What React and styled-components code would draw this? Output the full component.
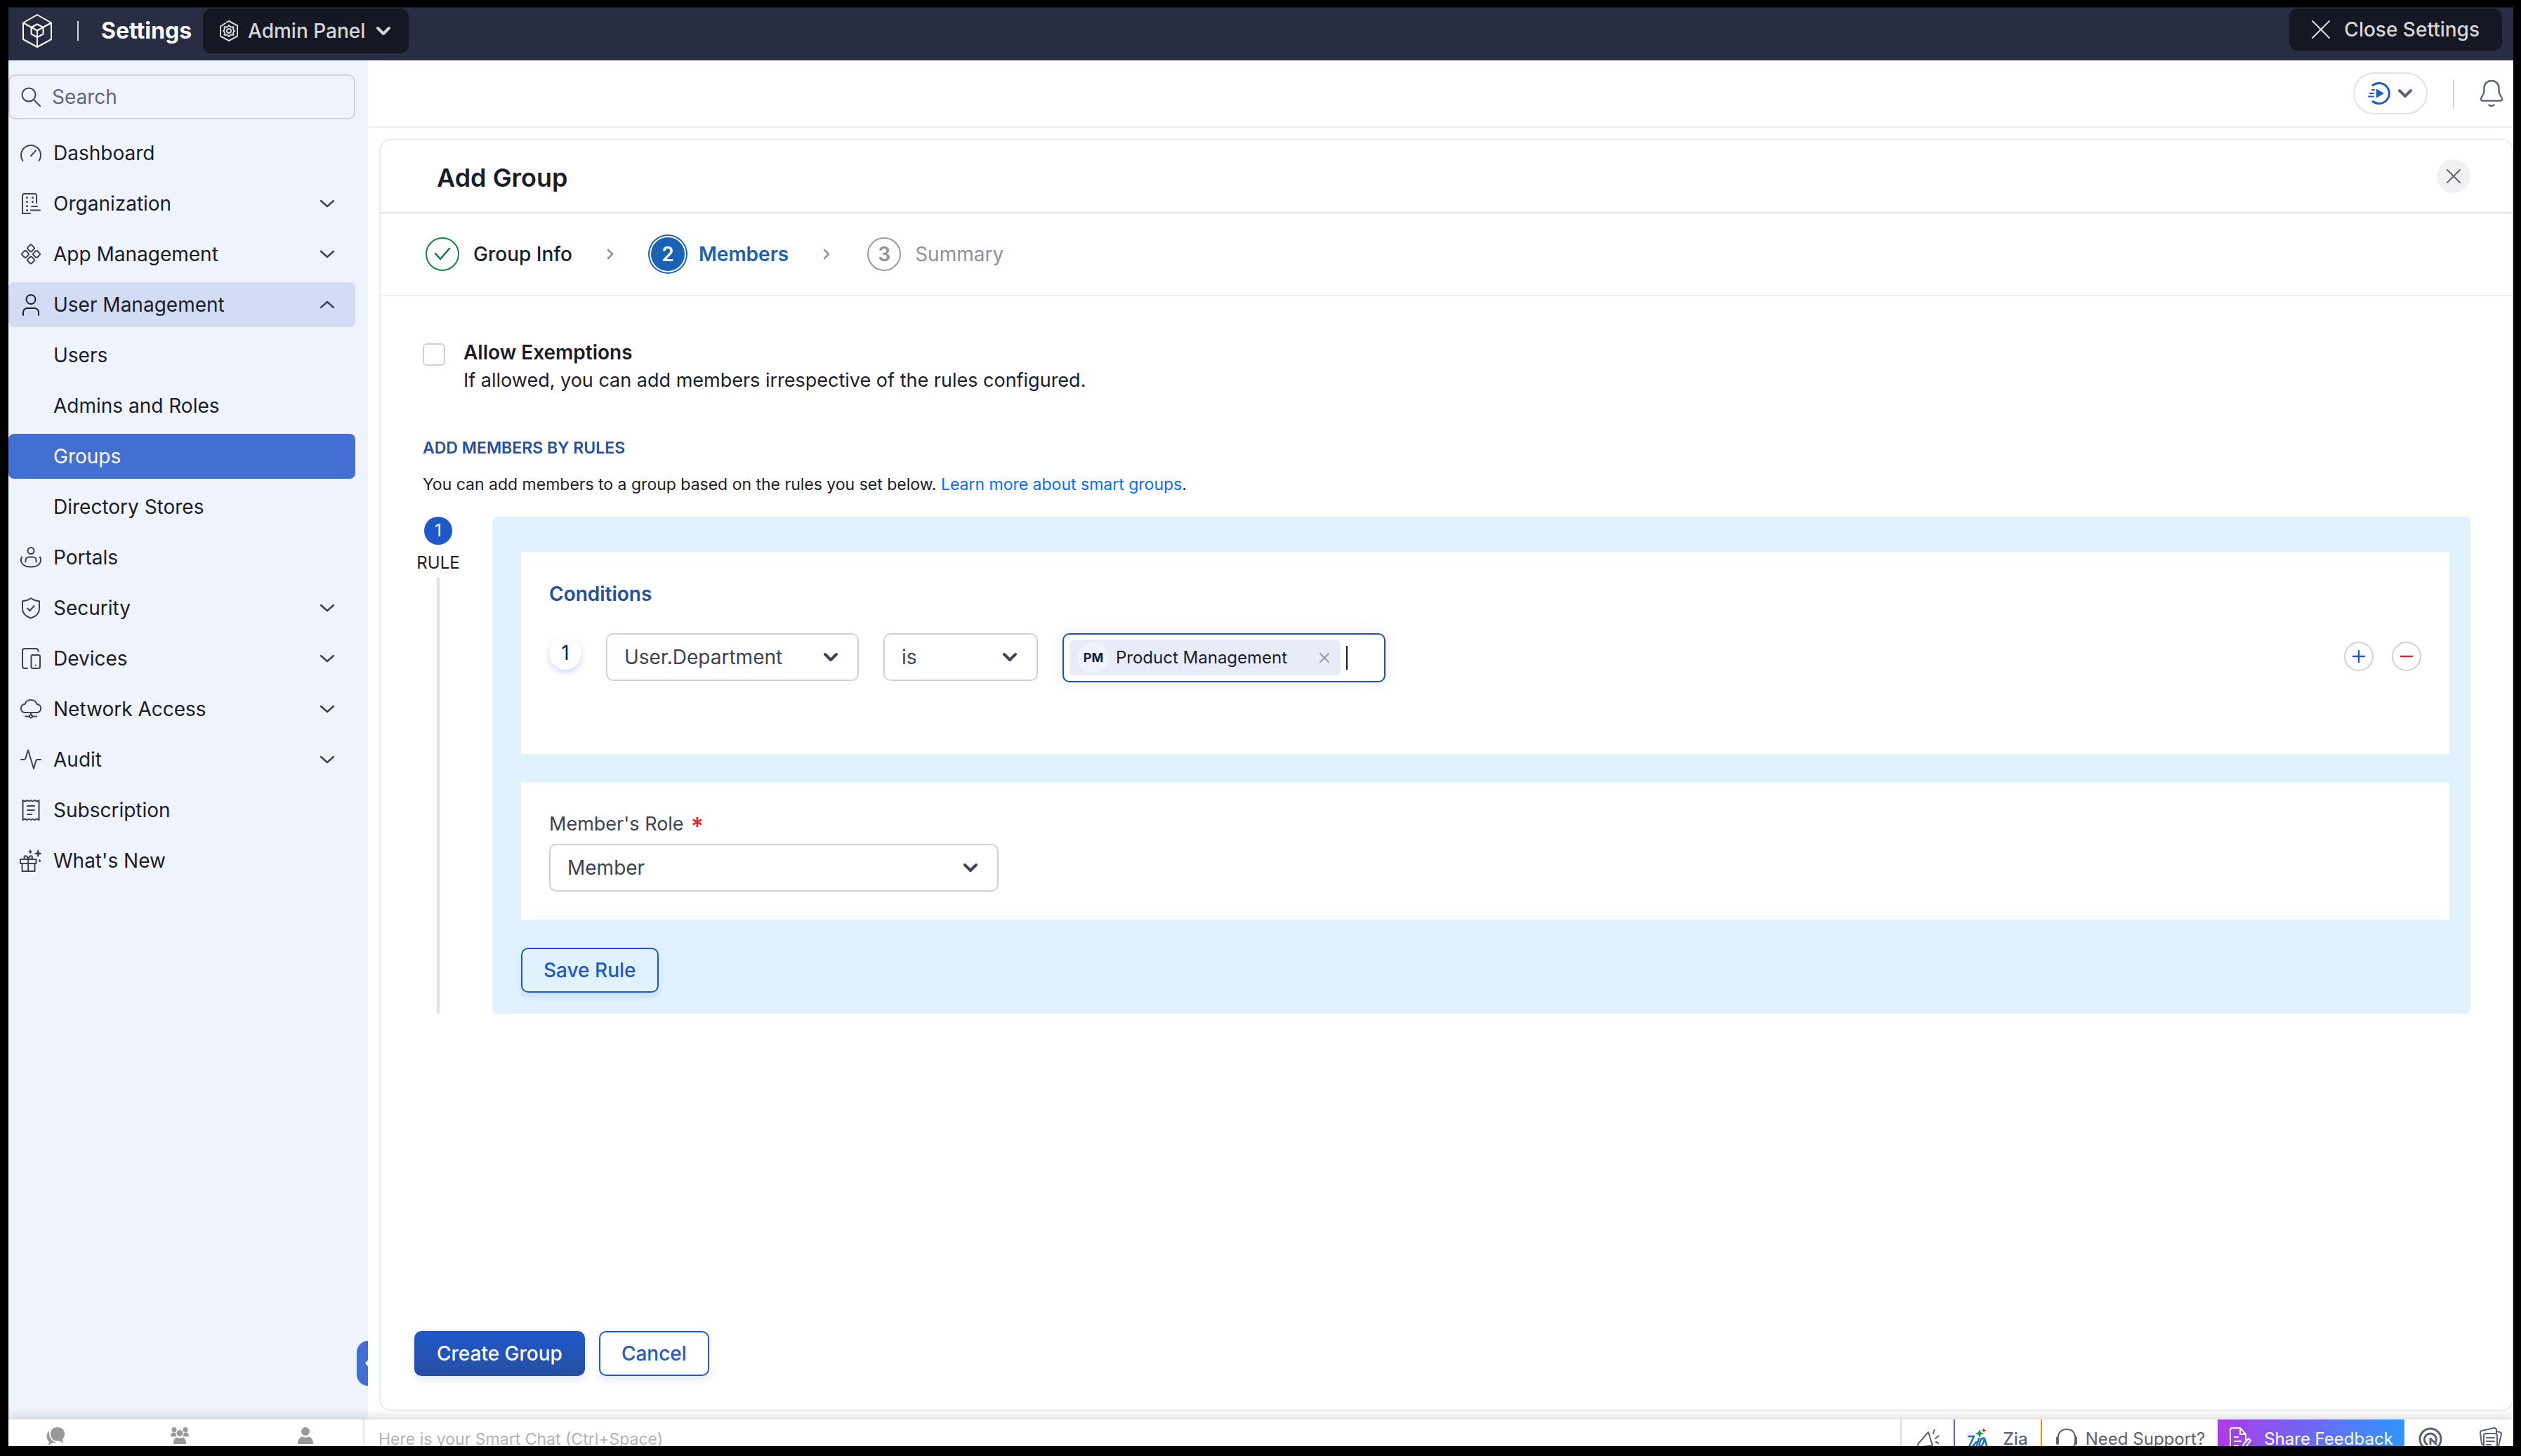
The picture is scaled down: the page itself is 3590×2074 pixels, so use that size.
import React from "react";
import styled, { createGlobalStyle, css } from "styled-components";

const GlobalStyle = createGlobalStyle`
	* {
		box-sizing: border-box;
	}

	body {
		margin: 0;
		background: #000000;
		color: #1a1d29;
		font-family: Inter, "Liberation Sans", sans-serif;
		font-size: 28px;
		line-height: 40px;
	}

	button,
	input,
	select {
		font: inherit;
		color: inherit;
		margin: 0;
	}

	button {
		cursor: pointer;
	}

	a {
		text-decoration: none;
	}

	h1,
	h2,
	h3,
	p,
	ol,
	ul {
		margin: 0;
		padding: 0;
		list-style: none;
	}
`;

const Svg = styled.svg`
	flex: none;
	display: block;
	fill: none;
	stroke: currentColor;
	stroke-width: ${({ $weight }) => $weight || 2};
	stroke-linecap: round;
	stroke-linejoin: round;
`;

const Icon = ({ w = 32, h = 32, weight, children }) => (
	<Svg width={w} height={h} viewBox={`0 0 ${w} ${h}`} $weight={weight} aria-hidden="true">
		{children}
	</Svg>
);

const ChevronDown = ({ weight = 4 }) => (
	<Icon w={24} h={16} weight={weight}>
		<path d="M4 4l8 8 8-8" />
	</Icon>
);

const ThinChevron = ({ up }) => (
	<Icon w={24} h={16} weight={2.5}>
		<path d={up ? "M3 12l9-8 9 8" : "M3 4l9 8 9-8"} />
	</Icon>
);

const Cross = ({ size, weight }) => (
	<Icon w={size} h={size} weight={weight}>
		<path d={`M1 1L${size - 1} ${size - 1}M${size - 1} 1L1 ${size - 1}`} />
	</Icon>
);

const navIcons = {
	dashboard: <path d="M4.500 27A14 14 0 1 1 27.500 27M16 20l7-7.500" />,
	organization: (
		<>
			<path d="M15 30H4V5a3 3 0 0 1 3-3h14a3 3 0 0 1 3 3v10M17 20h8M16 25.500h13" />
			<path strokeWidth="3" d="M10.500 7.500v0M18.500 7.500v0M10.500 13.500v0M18.500 13.500v0M10.500 19.500v0M10.500 25.500v0" />
		</>
	),
	apps: (
		<>
			<rect x="12" y="3.500" width="8" height="8" rx="2" transform="rotate(45 16 7.500)" />
			<rect x="12" y="20.500" width="8" height="8" rx="2" transform="rotate(45 16 24.500)" />
			<rect x="4" y="12" width="8" height="8" rx="2" transform="rotate(45 8 16)" />
			<rect x="20" y="12" width="8" height="8" rx="2" transform="rotate(45 24 16)" />
		</>
	),
	user: (
		<>
			<circle cx="16" cy="8.500" r="6.500" />
			<path d="M5 31v-4a6 6 0 0 1 6-6h10a6 6 0 0 1 6 6v4" />
		</>
	),
	portals: (
		<>
			<circle cx="16" cy="6.500" r="4.500" />
			<path d="M8.500 22.500V20a4.500 4.500 0 0 1 4.500-4.500h6a4.500 4.500 0 0 1 4.500 4.500v2.500" />
			<path d="M3 15.500C-.5 23 5 29.500 16 29.500S32.500 23 29 15.500" />
		</>
	),
	security: (
		<>
			<path d="M16 2c3.500 2.800 8 4 12 4.200V17c0 7-6 11.500-12 13.500C10 28.500 4 24 4 17V6.200C8 6 12.500 4.800 16 2z" />
			<path d="M11 16.500l3.500 3.500 6-7" />
		</>
	),
	devices: (
		<>
			<path d="M26.500 6V5a3 3 0 0 0-3-3H7a3 3 0 0 0-3 3v22a3 3 0 0 0 3 3h4" />
			<rect x="16.500" y="11" width="12.500" height="19" rx="2" />
			<path d="M22.700 25.500v0" />
		</>
	),
	network: (
		<>
			<path d="M8 21a6 6 0 0 1-.5-12 9 9 0 0 1 17 0A6 6 0 0 1 24 21zM16 21v3M8 26.500h5.500M18.500 26.500H24" />
			<circle cx="16" cy="26.500" r="2" />
		</>
	),
	audit: <path d="M2 16h4c1 0 2-.6 2.300-1.600L12 2.500 20 29l3.300-11.500c.3-1 1-1.500 2-1.500H30" />,
	subscription: (
		<>
			<path d="M4.500 2l3 1.500L11 2l2.500 1.500L16 2l2.500 1.500L21 2l3.500 1.500 3-1.500v28l-3-1.500L21 30l-2.500-1.500L16 30l-2.500-1.500L11 30l-3.500-1.500-3 1.500z" />
			<path d="M11 10h10M11 16h10M11 22h6" />
		</>
	),
	gift: (
		<>
			<path d="M1 14h22.500v6H1zM3.500 20v11h18V20M12.200 14v17" />
			<path d="M12 13.500c-1-5-5.500-5.500-5.500-2.500 0 1.500 1 2.500 1 2.500M12.500 13.500c1-5 5.500-5.500 5.500-2.500 0 1.500-1 2.500-1 2.500" />
			<path
				fill="currentColor"
				strokeWidth="1"
				d="M26.200 1l1.200 3.600L31 5.800l-3.600 1.200-1.200 3.600L25 7l-3.600-1.200L25 4.600zM15.200.8l.7 1.800 1.800.7-1.800.7-.7 1.800-.7-1.800-1.800-.7 1.800-.7zM28.600 14.500l.5 1.200 1.200.5-1.200.5-.5 1.200-.5-1.200-1.200-.5 1.200-.5z"
			/>
		</>
	),
};

const Page = styled.div`
	min-height: 100vh;
	display: flex;
	flex-direction: column;
	padding: 10px 11px 14px 12px;
	background: #000000;
`;

/* header */

const Header = styled.header`
	height: 76px;
	display: flex;
	align-items: flex-start;
	justify-content: space-between;
	padding: 1px 16px 0 20px;
	border-top: 1px solid #171923;
	background: #282d43;
	color: #ffffff;
`;

const Brand = styled.div`
	height: 64px;
	display: flex;
	align-items: center;
`;

const BrandDivider = styled.span`
	width: 2px;
	height: 28px;
	margin: 0 32px 0 36px;
	background: #d5d6da;
`;

const BrandTitle = styled.span`
	margin-right: 16px;
	font-size: 32px;
	font-weight: 700;
`;

const DarkButton = styled.button`
	height: ${({ $height }) => $height}px;
	display: flex;
	align-items: center;
	gap: ${({ $gap }) => $gap}px;
	padding: 0 ${({ $padding }) => $padding}px;
	border: none;
	border-radius: 12px;
	background: #151822;
	color: #d6d7da;
	font-weight: 500;
`;

/* sidebar */

const Columns = styled.div`
	flex: 1;
	display: flex;
	background: #ffffff;
`;

const Sidebar = styled.aside`
	position: relative;
	width: 512px;
	flex: none;
	padding: 20px 18px 0 0;
	background: #eff3fb;
	overflow: hidden;
`;

const SearchBox = styled.label`
	height: 64px;
	display: flex;
	align-items: center;
	gap: 16px;
	margin-bottom: 16px;
	padding: 0 16px;
	border: 2px solid #d2d2d4;
	border-radius: 10px;
	color: #3d4352;
`;

const SearchInput = styled.input`
	flex: 1;
	min-width: 0;
	padding: 0;
	border: none;
	outline: none;
	background: transparent;

	&::placeholder {
		color: #616878;
		opacity: 1;
	}
`;

const Nav = styled.nav`
	display: flex;
	flex-direction: column;
	gap: 8px;
`;

const NavItem = styled.a`
	height: 64px;
	display: flex;
	align-items: center;
	gap: 16px;
	padding: 0 28px 0 16px;
	border: none;
	border-radius: 8px;
	background: transparent;
	color: #1a1d29;
	text-align: left;

	& svg {
		color: #3d4352;
	}

	${({ $open }) =>
		$open &&
		css`
			background: #d2dcf5;

			& svg:first-child {
				color: #1a1d29;
			}
		`}

	${({ $sub }) =>
		$sub &&
		css`
			padding-left: 64px;
		`}

	${({ $selected }) =>
		$selected &&
		css`
			background: #436fd3;
			color: #ffffff;
		`}
`;

const NavLabel = styled.span`
	flex: 1;
`;

const CollapseHandle = styled.button`
	position: absolute;
	right: 0;
	bottom: 48px;
	width: 16px;
	height: 64px;
	padding: 0;
	border: none;
	border-radius: 16px 0 0 16px;
	background: #436fd3;
	color: #ffffff;
	overflow: hidden;

	& svg {
		margin-left: 11px;
	}
`;

/* main area */

const Main = styled.main`
	flex: 1;
	min-width: 0;
	display: flex;
	flex-direction: column;
`;

const Toolbar = styled.div`
	height: 96px;
	display: flex;
	align-items: center;
	justify-content: flex-end;
	padding-right: 14px;
	border-bottom: 2px solid #f0f0f0;
	color: #616878;
`;

const PillButton = styled.button`
	height: 60px;
	display: flex;
	align-items: center;
	gap: 8px;
	padding: 0 18px;
	border: 2px solid #e2e2e2;
	border-radius: 30px;
	background: #ffffff;
	color: #5b6271;
`;

const ToolbarDivider = styled.span`
	width: 2px;
	height: 40px;
	margin: 0 36px;
	background: #d0d0d0;
`;

const BareButton = styled.button`
	display: flex;
	padding: 0;
	border: none;
	background: transparent;
`;

const Card = styled.section`
	flex: 1;
	display: flex;
	flex-direction: column;
	margin: 16px 0 12px 16px;
	border: 2px solid #e6ecf9;
	border-radius: 16px;
`;

const CardHeader = styled.div`
	height: 104px;
	display: flex;
	align-items: center;
	justify-content: space-between;
	padding: 0 59px 0 80px;
	border-bottom: 2px solid #e0e0e0;
`;

const CardTitle = styled.h1`
	padding-top: 4px;
	font-size: 36px;
	font-weight: 600;
`;

const CloseButton = styled.button`
	width: 48px;
	height: 48px;
	display: flex;
	align-items: center;
	justify-content: center;
	padding: 0;
	border: none;
	border-radius: 50%;
	background: #f1f1f1;
	color: #5b6271;
`;

const Steps = styled.ol`
	height: 118px;
	display: flex;
	align-items: center;
	padding: 0 60px;
	border-bottom: 2px solid #f0f0f0;
`;

const stepColors = { done: "#1a1d29", current: "#1b62b5", next: "#8d929c" };

const Step = styled.li`
	display: flex;
	align-items: center;
	gap: 16px;
	color: ${({ $state }) => stepColors[$state]};
	font-weight: ${({ $state }) => ({ done: 500, current: 600, next: 400 })[$state]};
`;

const StepMark = styled.span`
	width: 48px;
	height: 48px;
	display: flex;
	align-items: center;
	justify-content: center;
	margin: 4px;
	border: 2px solid #969ba5;
	border-radius: 50%;
	font-weight: 600;

	${({ $state }) =>
		$state === "done" &&
		css`
			border-color: #16853f;
			color: #16753a;
		`}

	${({ $state }) =>
		$state === "current" &&
		css`
			border-color: #1b62b5;
			background: #1b62b5;
			color: #ffffff;
			box-shadow: 0 0 0 2px #ffffff, 0 0 0 4px #1b62b5;
		`}
`;

const StepArrow = styled.span`
	width: 108px;
	display: flex;
	justify-content: center;
	color: #8d929c;
`;

const Body = styled.div`
	flex: 1;
	padding: 60px 59px 60px 60px;
`;

const Exemption = styled.div`
	display: flex;
	gap: 26px;
`;

const Checkbox = styled.input`
	appearance: none;
	width: 32px;
	height: 32px;
	flex: none;
	margin-top: 7px;
	border: 2px solid #d0d0d0;
	border-radius: 6px;
	background: #ffffff;
`;

const Strong = styled.label`
	display: block;
	font-weight: 600;
`;

const Hint = styled.p`
	font-size: 27px;
`;

const SectionTitle = styled.h2`
	margin-top: 56px;
	color: #264fa0;
	font-size: 23px;
	font-weight: 600;
`;

const SectionText = styled.p`
	margin-top: 12px;
	font-size: 23px;

	& a {
		color: #0a6cff;
	}
`;

const Rule = styled.div`
	display: flex;
	margin-top: 26px;
`;

const RuleSide = styled.div`
	width: 60px;
	display: flex;
	flex-direction: column;
	align-items: center;
	margin: 0 48px 0 -8px;
	font-size: 24px;
`;

const RuleNumber = styled.span`
	width: 40px;
	height: 40px;
	margin-bottom: 6px;
	border-radius: 50%;
	background: #2058cb;
	color: #ffffff;
	text-align: center;
`;

const RuleLine = styled.span`
	flex: 1;
	width: 4px;
	background: #e2e2e2;
`;

const RulePanel = styled.div`
	flex: 1;
	padding: 50px 30px 30px 40px;
	border-radius: 6px;
	background: #e1f2ff;
`;

const Block = styled.div`
	min-height: ${({ $height }) => $height}px;
	margin-bottom: 40px;
	padding: 40px;
	background: #ffffff;
`;

const BlockTitle = styled.h3`
	margin-bottom: 36px;
	color: #264fa0;
	font-size: 28px;
	font-weight: 600;
`;

const Condition = styled.div`
	display: flex;
	align-items: flex-start;
	gap: 35px;
`;

const ConditionNumber = styled.span`
	width: 46px;
	height: 48px;
	line-height: 48px;
	margin-top: 4px;
	border-radius: 50%;
	box-shadow: 0 4px 8px rgba(38, 79, 160, 0.22);
	text-align: center;
`;

const SelectBox = styled.div`
	width: ${({ $width }) => $width}px;
	display: grid;
	align-items: center;
	color: #3d4352;

	& svg {
		grid-area: 1 / 1;
		justify-self: end;
		margin-right: 28px;
		pointer-events: none;
	}
`;

const Select = styled.select`
	grid-area: 1 / 1;
	width: 100%;
	height: 68px;
	appearance: none;
	padding: 0 64px 0 24px;
	border: 2px solid #d2d2d4;
	border-radius: 10px;
	background: #ffffff;
`;

const TagField = styled.div`
	width: 460px;
	height: 70px;
	display: flex;
	align-items: center;
	gap: 8px;
	padding: 0 8px;
	border: 2px solid #264fa0;
	border-radius: 10px;
	box-shadow: 0 0 20px rgba(67, 111, 211, 0.12);
`;

const Tag = styled.span`
	height: 50px;
	display: flex;
	align-items: center;
	padding: 0 16px 0 12px;
	border-radius: 6px;
	background: #e8ecf9;
	font-size: 24px;
`;

const TagAvatar = styled.span`
	width: 44px;
	height: 44px;
	line-height: 44px;
	margin-right: 10px;
	border-radius: 50%;
	background: #eff3fb;
	font-size: 18px;
	font-weight: 700;
	text-align: center;
`;

const TagText = styled.span`
	margin-right: 46px;
	white-space: nowrap;
`;

const Caret = styled.span`
	width: 2px;
	height: 34px;
	flex: none;
	background: #1a1d29;
`;

const TagInput = styled.input`
	flex: 1;
	width: 0;
	min-width: 0;
	padding: 0;
	border: none;
	outline: none;
	background: transparent;
`;

const ConditionActions = styled.div`
	display: flex;
	gap: 26px;
	margin: 12px 0 0 auto;
`;

const RoundButton = styled.button`
	width: 42px;
	height: 42px;
	display: flex;
	align-items: center;
	justify-content: center;
	padding: 0;
	border: 2px solid #d2d2d4;
	border-radius: 50%;
	background: #ffffff;
	color: ${({ $color }) => $color};
`;

const FieldLabel = styled.label`
	display: flex;
	gap: 10px;
	margin-bottom: 8px;
	color: #3d4352;
	font-size: 27px;
`;

const Required = styled.span`
	padding-top: 6px;
	color: #ee2027;
	font-size: 34px;
	font-weight: 600;
	line-height: 34px;
`;

const Button = styled.button`
	height: 64px;
	padding: 0 30px;
	border: 2px solid #2058cb;
	border-radius: 10px;
	background: ${({ $solid }) => ($solid ? "linear-gradient(#2058cb, #264fa0)" : "transparent")};
	background-origin: border-box;
	box-shadow: 0 6px 10px rgba(38, 79, 160, 0.12);
	color: ${({ $solid }) => ($solid ? "#ffffff" : "#2058cb")};
	font-weight: 500;

	${({ $solid }) =>
		$solid &&
		css`
			border-color: transparent;
		`}
`;

const Actions = styled.div`
	display: flex;
	gap: 20px;
	padding: 0 48px 48px;
`;

/* bottom bar */

const BottomBar = styled.footer`
	position: relative;
	height: 38px;
	display: flex;
	align-items: flex-start;
	background: #ffffff;
	color: #5b6271;
	font-size: 24px;
	box-shadow: 0 -4px 14px rgba(0, 0, 0, 0.14);
	clip-path: inset(-20px 0 0 0);
`;

const ChatTabs = styled.div`
	width: 507px;
	height: 56px;
	flex: none;
	display: grid;
	grid-template-columns: 134px 220px 138px;
	justify-items: center;
	border-right: 2px solid #e4e4e4;
	color: #999999;

	& svg {
		margin-top: 10px;
		fill: currentColor;
		stroke: none;
	}
`;

const SmartChat = styled.input`
	flex: 1;
	height: 56px;
	padding: 0 20px;
	border: none;
	outline: none;
	background: transparent;
	font-size: 23px;

	&::placeholder {
		color: #b3b3b3;
		opacity: 1;
	}
`;

const BarButton = styled.button`
	height: 56px;
	width: ${({ $width }) => $width}px;
	display: flex;
	align-items: center;
	justify-content: center;
	gap: ${({ $gap }) => $gap || 0}px;
	padding: 0;
	border: none;
	border-left: ${({ $line }) => ($line ? `2px solid ${$line}` : "none")};
	background: transparent;
	white-space: nowrap;
	font-weight: ${({ $weight }) => $weight || 400};
`;

const FeedbackButton = styled(BarButton)`
	background: linear-gradient(90deg, #ac3be6, #2f95ff);
	color: #ffffff;
`;

const NotesButton = styled(BarButton)`
	margin-left: 16px;
`;

const navItems = [
	{ label: "Dashboard", icon: "dashboard" },
	{ label: "Organization", icon: "organization", group: true },
	{ label: "App Management", icon: "apps", group: true },
	{ label: "User Management", icon: "user", group: true, open: true },
	{ label: "Users", sub: true },
	{ label: "Admins and Roles", sub: true },
	{ label: "Groups", sub: true, selected: true },
	{ label: "Directory Stores", sub: true },
	{ label: "Portals", icon: "portals" },
	{ label: "Security", icon: "security", group: true },
	{ label: "Devices", icon: "devices", group: true },
	{ label: "Network Access", icon: "network", group: true },
	{ label: "Audit", icon: "audit", group: true },
	{ label: "Subscription", icon: "subscription" },
	{ label: "What's New", icon: "gift" },
];

const SideNav = () => (
	<Sidebar>
		<SearchBox>
			<Icon w={28} h={28}>
				<circle cx="11" cy="11" r="9.500" />
				<path d="M18 18l9 9" />
			</Icon>
			<SearchInput type="text" placeholder="Search" aria-label="Search" />
		</SearchBox>
		<Nav>
			{navItems.map(({ label, icon, group, open, sub, selected }) => (
				<NavItem
					key={label}
					as={group ? "button" : "a"}
					href={group ? undefined : "#"}
					$open={open}
					$sub={sub}
					$selected={selected}
				>
					{icon && <Icon>{navIcons[icon]}</Icon>}
					<NavLabel>{label}</NavLabel>
					{group && <ThinChevron up={open} />}
				</NavItem>
			))}
		</Nav>
		<CollapseHandle aria-label="Collapse sidebar">
			<Icon w={12} h={20} weight={3}>
				<path d="M10 2L3 10l7 8" />
			</Icon>
		</CollapseHandle>
	</Sidebar>
);

const TopHeader = () => (
	<Header>
		<Brand>
			<Icon w={42} h={48}>
				<path d="M21 1l20 11.500v23.500L21 47 1 36V12.500zM1 12.500l20 11 20-11M21 23.500V47" />
				<path d="M21 14.500l8.500 4.500v9.500L21 33l-8.500-4.500V19z" />
			</Icon>
			<BrandDivider />
			<BrandTitle>Settings</BrandTitle>
			<DarkButton $height={64} $gap={14} $padding={24}>
				<Icon w={26} h={30} weight={2}>
					<path d="M10 2.700L13 1l12 6.500v14M25 22.500L13 29 1 22.500V8.500L8 4.200" />
					<path d="M13 7l2.500 2.500 4-.2-.4 3.700L21 15l-1.900 2 .4 3.700-4-.2L13 23l-2.500-2.500-4 .2.4-3.700L5 15l1.900-2-.4-3.700 4 .2z" />
					<circle cx="13" cy="15" r="3" />
				</Icon>
				Admin Panel
				<ChevronDown />
			</DarkButton>
		</Brand>
		<DarkButton $height={60} $gap={20} $padding={32}>
			<Cross size={26} weight={2} />
			Close Settings
		</DarkButton>
	</Header>
);

const TopToolbar = () => (
	<Toolbar>
		<PillButton aria-label="Quick start">
			<Svg width="34" height="34" viewBox="0 0 34 34" $weight={3} color="#2058cb">
				<path d="M8 5.500A14.500 14.500 0 1 1 8 28.500" />
				<path strokeWidth="2" d="M7 12h3M4 17h5M2 21.500h7" />
				<path fill="currentColor" stroke="none" d="M13 10.500L24 17l-11 6.500z" />
			</Svg>
			<ChevronDown />
		</PillButton>
		<ToolbarDivider />
		<BareButton aria-label="Notifications">
			<Icon w={34} h={40} weight={2.5}>
				<path d="M17 2C11 2 6.500 6.500 6.500 12.500v4c0 6-4.500 8-4.500 11.500 0 1.500 1 2.500 2.500 2.500h25c1.500 0 2.500-1 2.500-2.500 0-3.500-4.500-5.500-4.500-11.500v-4C27.500 6.500 23 2 17 2zM13.500 36.500c2 1.600 5 1.600 7 0" />
			</Icon>
		</BareButton>
	</Toolbar>
);

const Arrow = () => (
	<StepArrow>
		<Icon w={12} h={18} weight={2.5}>
			<path d="M3 3l6 6-6 6" />
		</Icon>
	</StepArrow>
);

const Dropdown = ({ width, options, ...props }) => (
	<SelectBox $width={width}>
		<Select {...props}>
			{options.map((option) => (
				<option key={option}>{option}</option>
			))}
		</Select>
		<ChevronDown />
	</SelectBox>
);

const RuleEditor = () => (
	<Rule>
		<RuleSide>
			<RuleNumber>1</RuleNumber>
			RULE
			<RuleLine />
		</RuleSide>
		<RulePanel>
			<Block $height={288}>
				<BlockTitle>Conditions</BlockTitle>
				<Condition>
					<ConditionNumber>1</ConditionNumber>
					<Dropdown width={360} aria-label="Attribute" options={["User.Department"]} />
					<Dropdown width={220} aria-label="Operator" options={["is"]} />
					<TagField>
						<Tag>
							<TagAvatar>PM</TagAvatar>
							<TagText>Product Management</TagText>
							<BareButton aria-label="Remove Product Management">
								<Svg width="14" height="14" viewBox="0 0 14 14" color="#969ba5">
									<path d="M1 1l12 12M13 1L1 13" />
								</Svg>
							</BareButton>
						</Tag>
						<Caret />
						<TagInput type="text" aria-label="Department value" />
					</TagField>
					<ConditionActions>
						<RoundButton $color="#2058cb" aria-label="Add condition">
							<Icon w={18} h={18} weight={2.5}>
								<path d="M9 1v16M1 9h16" />
							</Icon>
						</RoundButton>
						<RoundButton $color="#ee2027" aria-label="Remove condition">
							<Icon w={18} h={18} weight={2.5}>
								<path d="M1 9h16" />
							</Icon>
						</RoundButton>
					</ConditionActions>
				</Condition>
			</Block>
			<Block $height={196}>
				<FieldLabel htmlFor="role">
					Member's Role<Required>*</Required>
				</FieldLabel>
				<Dropdown width={640} id="role" options={["Member"]} />
			</Block>
			<Button>Save Rule</Button>
		</RulePanel>
	</Rule>
);

const Footer = () => (
	<BottomBar>
		<ChatTabs>
			<Icon w={28} h={28}>
				<path d="M17 1c6 0 10 4 10 9.500 0 3.500-1.500 6-3 7.500l1 6-5-3.500c-8 1.500-13-4-13-10S11 1 17 1z" />
				<path d="M5 6C-1 12 2 20 5 21.500L4 27l6-4c2 .3 4 0 5-.5C8 21 4 14 5 6z" />
			</Icon>
			<Icon w={28} h={28}>
				<circle cx="6" cy="4.500" r="3.500" />
				<circle cx="22" cy="4.500" r="3.500" />
				<circle cx="14" cy="9.500" r="4.500" />
				<path d="M1 14c0-4 2-5.500 5-5.500 1 0 2 .3 2.500.8-.5 2.500.5 4 1.500 5H2zM27 14c0-4-2-5.500-5-5.500-1 0-2 .3-2.500.8.5 2.500-.5 4-1.500 5h8zM5 25c0-6 2-9 5-9.500 2.500 1.500 5.500 1.500 8 0 3 .5 5 3.500 5 9.500z" />
			</Icon>
			<Icon w={28} h={28}>
				<circle cx="14" cy="7" r="6" />
				<path d="M3 25c0-7 2.500-9.500 6.500-10.500 2.500 1.500 6.500 1.500 9 0C22.500 15.500 25 18 25 25z" />
			</Icon>
		</ChatTabs>
		<SmartChat type="text" placeholder="Here is your Smart Chat (Ctrl+Space)" aria-label="Smart Chat" />
		<BarButton $width={76} $line="#dddddd" aria-label="Announcements">
			<Icon w={32} h={28}>
				<path d="M17 4L3 20c-2 3 0 6 4 5l16-2zM17 4l6 19M7 25l3 5h5l-1-6M24 6l2-6M27 13l5-4M28 18l4 2" />
			</Icon>
		</BarButton>
		<BarButton $width={124} $gap={20} $line="#5f5fd8" $weight={500}>
			<Svg width="30" height="32" viewBox="0 0 30 32" $weight={2.5}>
				<path stroke="#1b6fc0" d="M1 12h8L2 27c4 1 8-3 10-7M16 15l-4 13M24 15c-5-2-8 6-7 12 3 0 6-6 7-12l4 13" />
				<path fill="#0f9d58" stroke="none" d="M17 2l1.800 4.200L23 8l-4.200 1.800L17 14l-1.800-4.200L11 8l4.200-1.800z" />
				<path fill="#ee2027" stroke="none" d="M23 0l1 2.500 2.500 1-2.500 1L23 7l-1-2.500-2.500-1 2.500-1z" />
			</Svg>
			Zia
		</BarButton>
		<BarButton $width={252} $gap={10} $line="#f58a1f">
			<Icon w={34} h={32}>
				<path d="M5 12C6 5 11 2 17 2s11 3 12 10M29 20c0 6-4 10-10 10" />
				<path strokeWidth="4" d="M4 14v8M30 14v8" />
			</Icon>
			Need Support?
		</BarButton>
		<FeedbackButton $width={266} $gap={16}>
			<Icon w={34} h={34}>
				<path d="M12 31H5a3 3 0 0 1-3-3V4a3 3 0 0 1 3-3h11l8 9v8M16 1v9h8M8 14h5M8 20h9M8 26h5M19 30l2-6 7-8 3 3-7 9z" />
			</Icon>
			Share Feedback
		</FeedbackButton>
		<BarButton $width={74} aria-label="Ask">
			<Icon w={34} h={36} weight={3}>
				<circle cx="17" cy="18" r="15" />
				<path d="M12 25.500A8.500 8.500 0 1 1 25 21M17 17v8M17 17l8 8" />
			</Icon>
		</BarButton>
		<NotesButton $width={65} aria-label="Notes">
			<Icon w={32} h={34}>
				<rect x="6" y="9" width="19" height="23" rx="3" />
				<path d="M6 25l-3-1L1 8c0-2 1-3 2-3l18-4c2 0 3 1 3 3v4M24 6l5 1c1 0 2 1 2 3l-4 17M10 15h11M10 20h11M10 25h6" />
			</Icon>
		</NotesButton>
	</BottomBar>
);

export default function App() {
	return (
		<>
			<GlobalStyle />
			<Page>
				<TopHeader />
				<Columns>
					<SideNav />
					<Main>
						<TopToolbar />
						<Card>
							<CardHeader>
								<CardTitle>Add Group</CardTitle>
								<CloseButton aria-label="Close">
									<Cross size={20} weight={2} />
								</CloseButton>
							</CardHeader>
							<Steps>
								<Step $state="done">
									<StepMark $state="done">
										<Icon w={24} h={20} weight={2.5}>
											<path d="M2 9l7 8L22 2" />
										</Icon>
									</StepMark>
									Group Info
								</Step>
								<Arrow />
								<Step $state="current">
									<StepMark $state="current">2</StepMark>
									Members
								</Step>
								<Arrow />
								<Step $state="next">
									<StepMark>3</StepMark>
									Summary
								</Step>
							</Steps>
							<Body>
								<Exemption>
									<Checkbox type="checkbox" id="exemptions" />
									<div>
										<Strong htmlFor="exemptions">Allow Exemptions</Strong>
										<Hint>If allowed, you can add members irrespective of the rules configured.</Hint>
									</div>
								</Exemption>
								<SectionTitle>ADD MEMBERS BY RULES</SectionTitle>
								<SectionText>
									You can add members to a group based on the rules you set below.{" "}
									<a href="#">Learn more about smart groups</a>.
								</SectionText>
								<RuleEditor />
							</Body>
							<Actions>
								<Button $solid>Create Group</Button>
								<Button>Cancel</Button>
							</Actions>
						</Card>
					</Main>
				</Columns>
				<Footer />
			</Page>
		</>
	);
}
